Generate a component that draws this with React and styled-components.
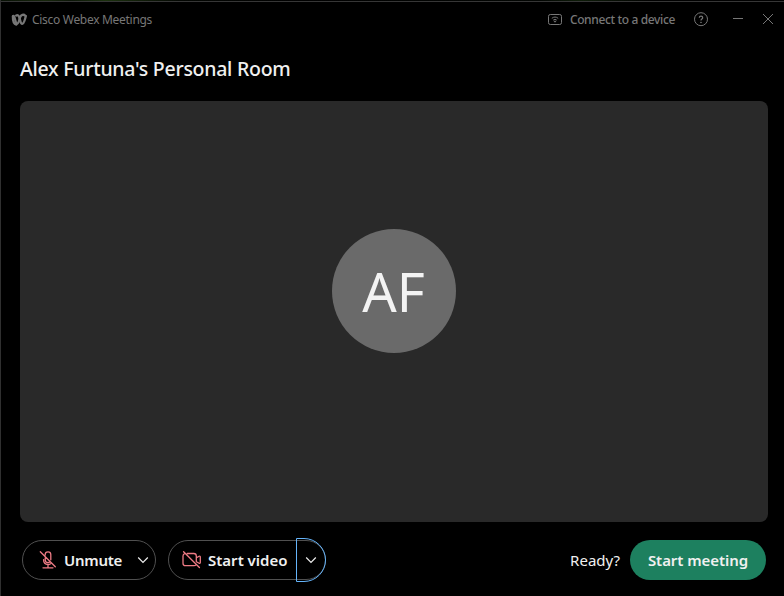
import React from 'react';
import styled, { createGlobalStyle } from 'styled-components';

const GlobalStyle = createGlobalStyle`
  * { box-sizing: border-box; }
  body { margin: 0; background: #000; font-family: 'Noto Sans', 'Open Sans', sans-serif; }
  button { font: inherit; color: inherit; background: none; border: 0; padding: 0; margin: 0; }
  svg { display: block; flex: none; fill: none; stroke: currentColor; }
`;

const Window = styled.main`
  width: 784px;
  height: 596px;
  display: flex;
  flex-direction: column;
  overflow: hidden;
  background: #000;
  border-left: 1px solid #303030;
`;

const Backdrop = styled.div`
  height: 1px;
  flex: none;
  background: linear-gradient(90deg, #071004, #16260b 45px, #0b1507 70px, #1b310e 105px, #030602 180px, #000 300px, #020502 540px, #0d1c08 578px, #000 650px);
`;

const TitleBar = styled.header`
  height: 37px;
  flex: none;
  display: flex;
  align-items: center;
  padding: 0 9px 1px 10px;
  border-top: 1px solid #363636;
  color: #777;
`;

const Brand = styled.div`
  display: flex;
  align-items: center;
  gap: 4px;
  margin-right: auto;
  font-size: 12px;
  letter-spacing: -0.3px;
  white-space: nowrap;
`;

const DeviceButton = styled.button`
  display: flex;
  align-items: center;
  gap: 8px;
  font-size: 12px;
  font-weight: 500;
  letter-spacing: -0.36px;
  white-space: nowrap;
`;

const WindowButtons = styled.div`
  display: flex;
  align-items: center;
  gap: 16px;
  margin-left: 18px;
`;

const Minimize = styled.svg`
  margin-left: 7px;
`;

const RoomTitle = styled.h1`
  height: 27px;
  margin: 17px 0 19px 19px;
  font-size: 19.5px;
  line-height: 27px;
  font-weight: 500;
  letter-spacing: -0.26px;
  color: #f0f0f0;
  white-space: nowrap;
`;

const Preview = styled.section`
  width: 748px;
  height: 421px;
  flex: none;
  margin-left: 19px;
  display: flex;
  align-items: center;
  justify-content: center;
  padding-bottom: 41px;
  border-radius: 8px;
  background: #292929;
`;

const Avatar = styled.div`
  width: 124px;
  height: 124px;
  display: flex;
  align-items: center;
  justify-content: center;
  padding: 0 1px 1px 0;
  border-radius: 50%;
  background: #6a6a6a;
  color: #f3f3f3;
  font-size: 54px;
  font-weight: 380;
  line-height: 1;
`;

const Controls = styled.footer`
  height: 74px;
  display: flex;
  align-items: center;
  padding: 2px 18px 0 21px;
  color: #f0f0f0;
  font-size: 15px;
  line-height: 22px;
`;

const Pill = styled.div`
  width: ${({ $width }) => $width}px;
  height: 40px;
  display: flex;
  align-items: center;
  margin-right: 12px;
  border: 1px solid #505050;
  border-radius: 20px;
`;

const MediaAction = styled.button`
  display: flex;
  align-items: center;
  flex: 1;
  gap: ${({ $gap }) => $gap}px;
  padding-left: ${({ $inset }) => $inset}px;
  font-weight: 600;
  letter-spacing: ${({ $tracking }) => $tracking}px;
  white-space: nowrap;
  svg { color: #ee7b85; }
`;

const Options = styled.button`
  width: 25px;
  height: 38px;
  flex: none;
  display: flex;
  align-items: center;
  justify-content: center;
  color: #eee;
`;

const FocusedOptions = styled(Options)`
  width: 30px;
  height: 44px;
  margin-right: -1px;
  border: 1px solid #65b4fa;
  border-radius: 0 22px 22px 0;
`;

const Ready = styled.span`
  margin-left: auto;
  margin-right: 10px;
`;

const StartButton = styled.button`
  width: 136px;
  height: 40px;
  border-radius: 20px;
  background: #1d805f;
  font-weight: 600;
  letter-spacing: -0.05px;
  white-space: nowrap;
`;

function WebexLogo() {
  return (
    <svg width="17" height="14" viewBox="0 0 17 14" strokeWidth="2.3" strokeLinecap="round">
      <path d="M2 3.2C3.8 1.6 4.3 10.8 6 10.8c1.8 0 2.2-4.2 3.3-7C10 2 12.5.9 14.3 2.7" />
      <path d="M5.2 2.5C8 .8 8.6 5.6 9.4 8.3c.9 3.6 2.8 3.2 4-.3.7-2 1.1-3.6 1.4-4.8" />
      <path d="M1.9 3.5C1.8 7.4 3 11.1 5.3 11.6" />
    </svg>
  );
}

function DeviceIcon() {
  return (
    <svg width="15" height="13" viewBox="0 0 15 13">
      <rect x="1.5" y="1.5" width="13" height="10" rx="1.8" />
      <path d="M4.8 5.4c1.8-1.8 4.6-1.8 6.4 0M6.2 7.2c.9-1 2.7-1 3.6 0" />
      <circle cx="8" cy="8.5" r=".6" fill="currentColor" />
    </svg>
  );
}

function HelpIcon() {
  return (
    <svg width="15" height="15" viewBox="0 0 15 15">
      <circle cx="8" cy="7.2" r="6.5" />
      <path d="M6.3 5.8c0-2.2 3.4-2.2 3.4 0 0 1.3-1.7 1.2-1.7 2.6" strokeWidth="1.2" />
      <circle cx="8" cy="10.4" r=".4" fill="currentColor" />
    </svg>
  );
}

function MicOffIcon() {
  return (
    <svg width="18" height="20" viewBox="0 0 18 20" strokeWidth="1.3" strokeLinecap="round">
      <path d="M6.2 5V4.6a2.8 2.8 0 0 1 5.6 0v5.2M6.2 7.8v2c0 1.8 1.2 2.9 2.8 2.9.7 0 1.3-.2 1.8-.6M4.6 9.6v.5c0 2.8 1.9 4.4 4.4 4.4 1 0 1.9-.3 2.6-.8M9 14.6v3.2M4 17.8h10M1.3 1.8l15 15" />
    </svg>
  );
}

function VideoOffIcon() {
  return (
    <svg width="20" height="18" viewBox="0 0 20 18" strokeWidth="1.3" strokeLinecap="round" strokeLinejoin="round">
      <path d="M5.3 2.5h6.5c1.6 0 2.5.9 2.5 2.5v5.6M2.9 2.6C1.6 2.8 1 3.7 1 5v7.2c0 1.6.9 2.5 2.5 2.5h8.3c1 0 1.8-.3 2.2-1M14.4 6.8l2.7-1.5c.7-.4 1.2-.1 1.2.7v5.5c0 .8-.5 1.1-1.2.7l-2.7-1.5M1.6.7l15.8 15.8" />
    </svg>
  );
}

function Chevron() {
  return <svg width="12" height="8" viewBox="0 0 12 8" strokeWidth="1.2"><path d="m1.2 1.5 4.8 4.8 4.8-4.8" /></svg>;
}

export default function App() {
  return (
    <>
      <GlobalStyle />
      <Window>
        <Backdrop />
        <TitleBar>
          <Brand><WebexLogo />Cisco Webex Meetings</Brand>
          <DeviceButton><DeviceIcon />Connect to a device</DeviceButton>
          <WindowButtons>
            <HelpIcon />
            <Minimize width="14" height="14" viewBox="0 0 14 14"><path d="M2 5.5h10" /></Minimize>
            <svg width="14" height="14" viewBox="0 0 14 14"><path d="m2 1 10 10M12 1l-10 10" /></svg>
          </WindowButtons>
        </TitleBar>
        <RoomTitle>Alex Furtuna's Personal Room</RoomTitle>
        <Preview><Avatar>AF</Avatar></Preview>
        <Controls>
          <Pill $width={134}>
            <MediaAction $inset={16} $gap={7} $tracking={-0.25}><MicOffIcon />Unmute</MediaAction>
            <Options><Chevron /></Options>
          </Pill>
          <Pill $width={158}>
            <MediaAction $inset={13} $gap={6} $tracking={0}><VideoOffIcon />Start video</MediaAction>
            <FocusedOptions><Chevron /></FocusedOptions>
          </Pill>
          <Ready>Ready?</Ready>
          <StartButton>Start meeting</StartButton>
        </Controls>
      </Window>
    </>
  );
}
